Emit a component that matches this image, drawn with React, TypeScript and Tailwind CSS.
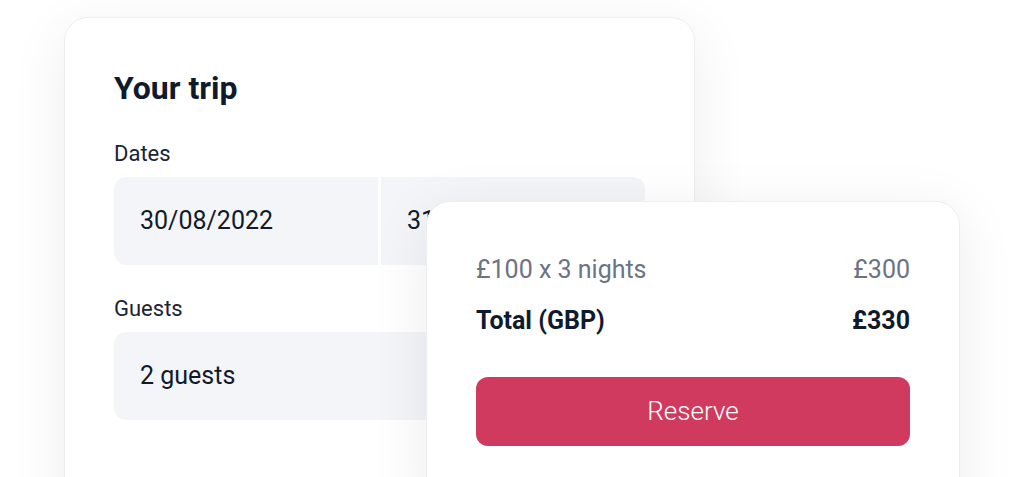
import React from "react";

export default function App() {
  return (
    <div
      className="relative w-[1024px] h-[477px] overflow-hidden bg-white"
      style={{ fontFamily: "Roboto, 'Noto Sans', sans-serif" }}
    >
      <div className="ml-[64px] mt-[17px] w-[631px] h-[520px] rounded-[24px] border border-[#eceef2] bg-white shadow-[0_12px_60px_rgba(17,24,39,0.07)] px-[49px] pt-[50px]">
        <h1 className="text-[32px] leading-[40px] font-bold text-[#0f1b2d]">Your trip</h1>
        <div className="mt-[32px] text-[22px] leading-[28px] text-[#1a2436]">Dates</div>
        <div className="mt-[9px] flex h-[88px] gap-[3px]">
          <div className="flex-1 flex items-center rounded-l-[12px] bg-[#f4f5f9] pl-[26px] text-[25px] text-[#111a2b]">30/08/2022</div>
          <div className="flex-1 flex items-center rounded-r-[12px] bg-[#f4f5f9] pl-[26px] text-[25px] text-[#111a2b]">31/08/2022</div>
        </div>
        <div className="mt-[30px] text-[22px] leading-[28px] text-[#1a2436]">Guests</div>
        <div className="mt-[9px] flex h-[88px] items-center rounded-[12px] bg-[#f4f5f9] pl-[26px] text-[25px] text-[#111a2b]">2 guests</div>
      </div>

      <div className="absolute left-[426px] top-[201px] w-[534px] h-[320px] rounded-[24px] border border-[#eceef2] bg-white shadow-[0_12px_60px_rgba(17,24,39,0.08)] px-[49px] pt-[52px]">
        <div className="flex justify-between text-[25px] leading-[32px] text-[#6b7385]">
          <span>£100 x 3 nights</span>
          <span>£300</span>
        </div>
        <div className="mt-[19px] flex justify-between text-[25px] leading-[32px] font-bold text-[#0f1b2d]">
          <span>Total (GBP)</span>
          <span>£330</span>
        </div>
        <button className="mt-[40px] flex h-[69px] w-full items-center justify-center rounded-[12px] bg-[#d13a5f] text-[26px] font-light text-white">
          Reserve
        </button>
      </div>
    </div>
  );
}
